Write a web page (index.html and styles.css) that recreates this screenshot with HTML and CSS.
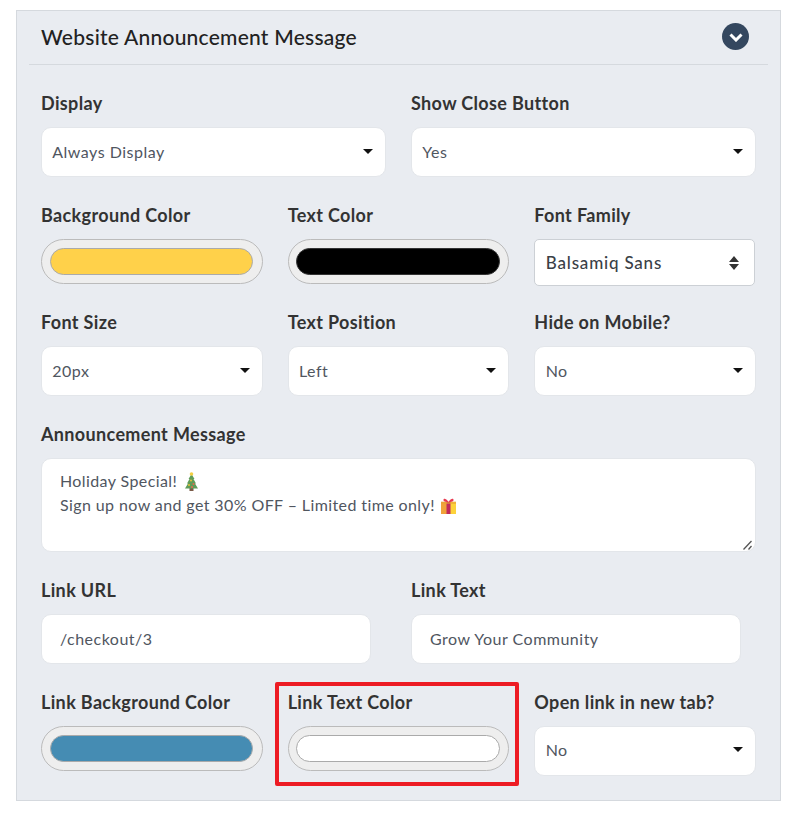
FILE: index.html
```html
<!DOCTYPE html>
<html lang="en">
<head>
    <meta charset="UTF-8">
    <title>Website Announcement Message</title>
    <link rel="stylesheet" href="styles.css">
</head>
<body>
    <section class="panel">
        <header class="panel-head">
            <h2>Website Announcement Message</h2>
            <span class="toggle">
                <svg width="14" height="9" viewBox="0 0 14 9"><path d="M1.500 1.500L7 7l5.500-5.500" fill="none" stroke="#fff" stroke-width="3"/></svg>
            </span>
        </header>
        <div class="panel-body">
            <div class="row cols-2">
                <div class="field">
                    <label>Display</label>
                    <div class="select"><span>Always Display</span><i class="caret"></i></div>
                </div>
                <div class="field">
                    <label>Show Close Button</label>
                    <div class="select"><span>Yes</span><i class="caret"></i></div>
                </div>
            </div>
            <div class="row cols-3 row-tight">
                <div class="field">
                    <label>Background Color</label>
                    <div class="swatch"><div class="chip chip-yellow"></div></div>
                </div>
                <div class="field">
                    <label>Text Color</label>
                    <div class="swatch"><div class="chip chip-black"></div></div>
                </div>
                <div class="field">
                    <label>Font Family</label>
                    <div class="native-select">
                        <span>Balsamiq Sans</span>
                        <svg width="10" height="14" viewBox="0 0 10 14"><path d="M5 0l5 6H0zM5 14L0 8h10z" fill="#333"/></svg>
                    </div>
                </div>
            </div>
            <div class="row cols-3">
                <div class="field">
                    <label>Font Size</label>
                    <div class="select"><span>20px</span><i class="caret"></i></div>
                </div>
                <div class="field">
                    <label>Text Position</label>
                    <div class="select"><span>Left</span><i class="caret"></i></div>
                </div>
                <div class="field">
                    <label>Hide on Mobile?</label>
                    <div class="select"><span>No</span><i class="caret"></i></div>
                </div>
            </div>
            <div class="row">
                <div class="field">
                    <label>Announcement Message</label>
                    <div class="textarea">
                        <div>Holiday Special!
                            <svg class="emoji emoji-tree" width="13" height="19" viewBox="0 0 13 19"><rect x="4.500" y="16" width="4" height="3" fill="#7a5a48"/><path d="M6.500 2L9.500 7H8.500L11 11.500H10L13 16.500H0L3 11.500H2L4.500 7H3.500z" fill="#5f9c58"/><circle cx="6.500" cy="2" r="1.800" fill="#f3cf45"/><circle cx="6" cy="8.500" r="1" fill="#e9c23c"/><circle cx="8.500" cy="12" r="1" fill="#e8684c"/><circle cx="4" cy="13" r="1" fill="#e9c23c"/><circle cx="7" cy="15" r="1" fill="#e8684c"/></svg>
                        </div>
                        <div>Sign up now and get 30% OFF – Limited time only!
                            <svg class="emoji" width="15" height="16" viewBox="0 0 15 16"><rect y="4" width="7" height="12" fill="#f0a23a"/><rect x="8" y="4" width="7" height="12" fill="#fdd23a"/><rect x="5.500" y="4" width="4" height="12" fill="#c02a5c"/><rect y="3.500" width="15" height="2.500" fill="#e8a035" opacity=".6"/><path d="M7.500 4C5 0 2 0 2.500 2.500 3 3.500 5.500 4 7.500 4zM7.500 4c2.500-4 5.500-4 5-1.500C12 3.500 9.500 4 7.500 4z" fill="#e8384f"/></svg>
                        </div>
                        <svg class="grip" width="9" height="10" viewBox="0 0 9 10"><path d="M8.500 1L.5 9.500M8.500 6L5.500 9.500" stroke="#555" stroke-width="1.300" fill="none"/></svg>
                    </div>
                </div>
            </div>
            <div class="row cols-link">
                <div class="field">
                    <label>Link URL</label>
                    <div class="input">/checkout/3</div>
                </div>
                <div class="field">
                    <label>Link Text</label>
                    <div class="input">Grow Your Community</div>
                </div>
            </div>
            <div class="row cols-3">
                <div class="field">
                    <label>Link Background Color</label>
                    <div class="swatch"><div class="chip chip-blue"></div></div>
                </div>
                <div class="field">
                    <label>Link Text Color</label>
                    <div class="swatch"><div class="chip chip-white"></div></div>
                    <div class="marker"></div>
                </div>
                <div class="field">
                    <label>Open link in new tab?</label>
                    <div class="select select-last"><span>No</span><i class="caret"></i></div>
                </div>
            </div>
        </div>
    </section>
</body>
</html>
```

FILE: styles.css
```css
html,body{ margin:0; padding:0; background:#fff; }
body{ font-family:"Lato","Noto Sans",sans-serif; color:#333; }

.panel{
    margin:10px 14px 0 16px;
    width:765px;
    box-sizing:border-box;
    background:#e9ecf1;
    border:1px solid #d5d9de;
    padding:0 12px 24px;
}
.panel-head{
    display:flex;
    justify-content:space-between;
    align-items:center;
    height:51px;
    padding:0 19px 2px 12px;
    border-bottom:1px solid #d5d9de;
}
.panel-head h2{
    margin:0;
    font-size:21px;
    font-weight:500;
    color:#222;
    letter-spacing:.24px;
}
.toggle{
    width:27px;
    height:27px;
    border-radius:50%;
    background:#34475f;
    display:flex;
    align-items:center;
    justify-content:center;
}
.toggle svg{ margin-top:2px; }
.panel-body{ padding:26px 12px 0; }

.row{ display:grid; gap:25px; margin-bottom:26px; }
.row:last-child{ margin-bottom:0; }
.row-tight{ margin-bottom:24px; }
.cols-2{ grid-template-columns:345px 345px; }
.cols-3{ grid-template-columns:repeat(3,1fr); }
.cols-link{ grid-template-columns:330px 330px; gap:40px; }

.field{ position:relative; }
.field label{
    display:block;
    height:24px;
    line-height:24px;
    margin-bottom:12px;
    font-size:18px;
    font-weight:700;
    color:#333;
    letter-spacing:.35px;
}

.select,.input{
    height:50px;
    box-sizing:border-box;
    background:#fff;
    border:1px solid #e3e6ea;
    border-radius:10px;
    font-size:16px;
    color:#50565f;
    letter-spacing:.5px;
}
.select{
    display:flex;
    align-items:center;
    justify-content:space-between;
    padding:0 12px 2px 10.300px;
}
.select-last{ padding-bottom:3px; }
.caret{
    width:0;
    height:0;
    border-left:5px solid transparent;
    border-right:5px solid transparent;
    border-top:5px solid #111;
}
.input{
    display:flex;
    align-items:center;
    padding:0 18px 2px;
}

.swatch{
    height:45px;
    box-sizing:border-box;
    background:#eee;
    border:1px solid #bbb;
    border-radius:23px;
    padding:8px 8.300px 8px 7.700px;
}
.chip{
    height:27px;
    box-sizing:border-box;
    border:1px solid #aaa;
    border-radius:14px;
}
.chip-yellow{ background:#ffd14a; }
.chip-black{ background:#000; border-color:#333; }
.chip-blue{ background:#458cb3; }
.chip-white{ background:#fff; }

.native-select{
    height:47px;
    width:221px;
    box-sizing:border-box;
    display:flex;
    align-items:center;
    justify-content:space-between;
    padding:0 15px 0 10.500px;
    background:#fff;
    border:1px solid #ccd0d5;
    border-radius:5px;
    font-size:17px;
    font-weight:500;
    color:#3a3f47;
    letter-spacing:.8px;
}

.textarea{
    position:relative;
    height:94px;
    box-sizing:border-box;
    padding:10px 18px;
    background:#fff;
    border:1px solid #e3e6ea;
    border-radius:10px;
    font-size:16px;
    line-height:24px;
    color:#50565f;
    letter-spacing:.4px;
}
.emoji{ vertical-align:-3px; margin-left:2px; }
.emoji-tree{ vertical-align:-4px; margin-left:3px; }
.grip{ position:absolute; right:3px; bottom:1px; }

.marker{
    position:absolute;
    left:-13px;
    right:-10px;
    top:-8px;
    bottom:-10px;
    border:4px solid #ed1c24;
    border-radius:2px;
    pointer-events:none;
}
```
